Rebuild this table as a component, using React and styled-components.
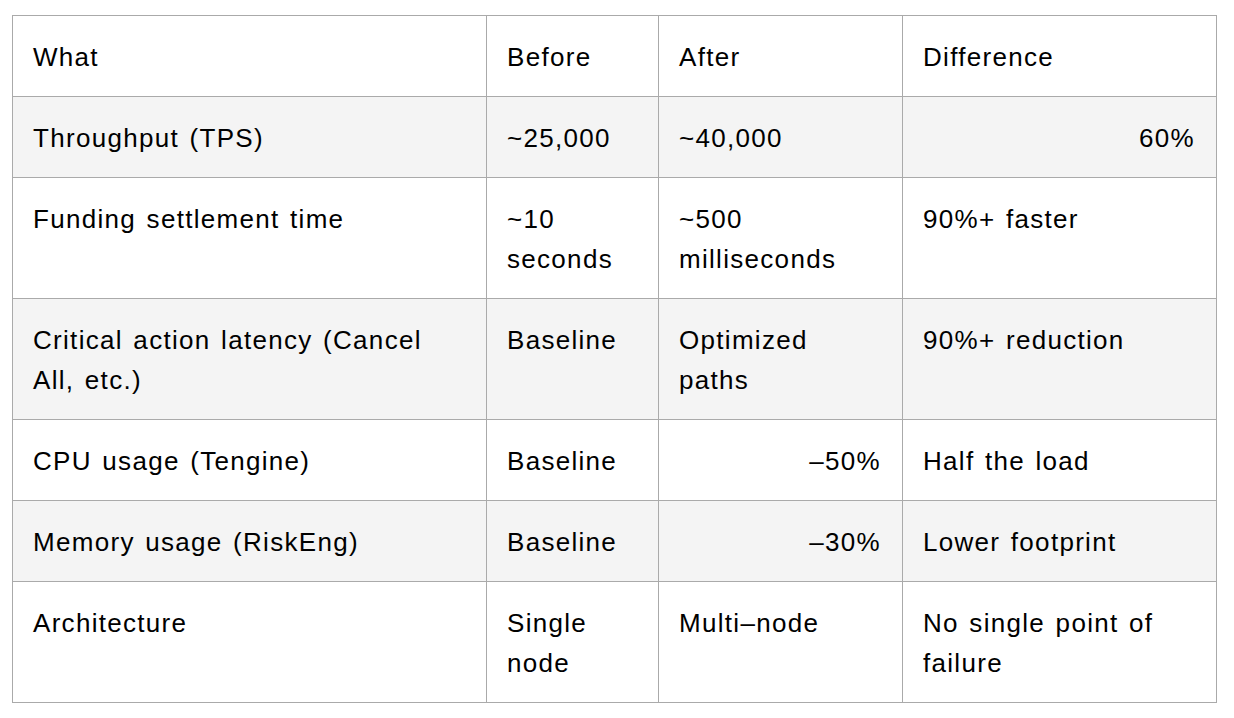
import React from 'react';
import styled, {createGlobalStyle} from 'styled-components';

const rows = [
    {what: 'Throughput (TPS)', before: '~25,000', after: '~40,000', diff: '60%', diffRight: true},
    {what: 'Funding settlement time', before: '~10 seconds', after: '~500 milliseconds', diff: '90%+ faster'},
    {what: 'Critical action latency (Cancel All, etc.)', before: 'Baseline', after: 'Optimized paths', diff: '90%+ reduction'},
    {what: 'CPU usage (Tengine)', before: 'Baseline', after: '–50%', afterRight: true, diff: 'Half the load'},
    {what: 'Memory usage (RiskEng)', before: 'Baseline', after: '–30%', afterRight: true, diff: 'Lower footprint'},
    {what: 'Architecture', before: 'Single node', after: 'Multi–node', diff: 'No single point of failure'},
];

export default () => (
    <>
        <GlobalStyle />
        <Page>
            <Table>
                <colgroup>
                    <col style={{width: 474}} />
                    <col style={{width: 172}} />
                    <col style={{width: 244}} />
                    <col style={{width: 314}} />
                </colgroup>
                <thead>
                    <Row>
                        <Cell as="th">What</Cell>
                        <Cell as="th">Before</Cell>
                        <Cell as="th">After</Cell>
                        <Cell as="th">Difference</Cell>
                    </Row>
                </thead>
                <tbody>
                    {rows.map(r =>
                        <Row key={r.what}>
                            <Cell>{r.what}</Cell>
                            <Cell>{r.before}</Cell>
                            <Cell $right={r.afterRight}>{r.after}</Cell>
                            <Cell $right={r.diffRight}>{r.diff}</Cell>
                        </Row>
                    )}
                </tbody>
            </Table>
        </Page>
    </>
);

const GlobalStyle = createGlobalStyle`
  body {
    margin: 0;
    background: #fff;
    font-family: "Liberation Sans", Arial, sans-serif;
    color: #000;
  }
`;

const Page = styled.div`
  padding: 15px 0 0 12px;
`;

const Table = styled.table`
  border-collapse: collapse;
  table-layout: fixed;
  width: 1205px;
`;

const Row = styled.tr`
  tbody &:nth-child(odd) {
    background-color: #f4f4f4;
  }
`;

const Cell = styled.td`
  border: 1px solid #aaaaaa;
  padding: 21px 21px 19px 20px;
  font-size: 26px;
  letter-spacing: 1.3px;
  word-spacing: 2px;
  line-height: 40px;
  font-weight: normal;
  text-align: ${p => p.$right ? 'right' : 'left'};
  vertical-align: top;
`;
